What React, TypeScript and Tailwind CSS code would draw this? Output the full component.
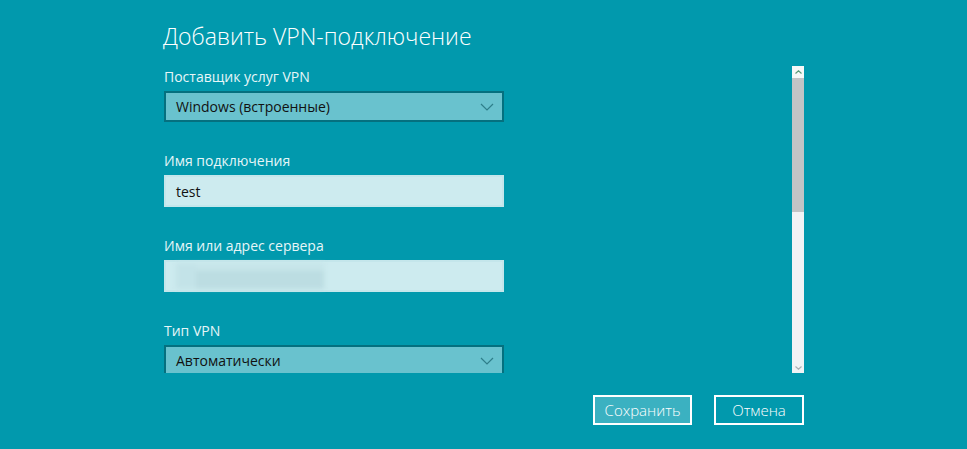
import React from "react";

const font = { fontFamily: '"Open Sans", "Noto Sans", "Liberation Sans", sans-serif' };

function Chevron() {
  return (
    <svg width="14" height="8" viewBox="0 0 14 8" className="shrink-0">
      <polyline points="1,1 7,7 13,1" fill="none" stroke="#2f7e8a" strokeWidth="1.2" />
    </svg>
  );
}

function Label({ children }: { children: React.ReactNode }) {
  return <div className="h-5 text-[14px] leading-5 text-[#e6f6f8]">{children}</div>;
}

function Dropdown({ value }: { value: string }) {
  return (
    <div className="flex h-[31px] w-[340px] items-center justify-between border-2 border-[#05707f] bg-[#69c2ce] pl-[10px] pr-[8px] text-[14px] text-[#111]">
      <span>{value}</span>
      <Chevron />
    </div>
  );
}

function TextBox({ children }: { children?: React.ReactNode }) {
  return (
    <div className="flex h-[32px] w-[340px] items-center border-2 border-[#c4e6eb] bg-[#cdebef] pl-[10px] text-[14px] text-[#111]">
      {children}
    </div>
  );
}

function Scrollbar() {
  return (
    <div className="flex w-[12px] flex-col bg-[#f1f3f5]">
      <div className="flex h-[12px] items-center justify-center bg-[#f6f8f8]">
        <svg width="7" height="4" viewBox="0 0 7 4">
          <polyline points="0.5,3.5 3.5,0.8 6.5,3.5" fill="none" stroke="#5a9a7a" strokeWidth="1.2" />
        </svg>
      </div>
      <div className="h-[134px] bg-[#c2c4c6]" />
      <div className="flex-1" />
      <div className="flex h-[10px] items-center justify-center">
        <svg width="7" height="4" viewBox="0 0 7 4">
          <polyline points="0.5,0.5 3.5,3.2 6.5,0.5" fill="none" stroke="#a9b0b3" strokeWidth="1.2" />
        </svg>
      </div>
    </div>
  );
}

export default function App() {
  return (
    <div className="h-[449px] w-[967px] overflow-hidden bg-[#0199ad] pl-[163px] pt-[20px]" style={font}>
      <div className="w-[641px]">
        <h1 className="h-[46px] text-[23px] font-light leading-[32px] text-white">Добавить VPN-подключение</h1>

        <div className="flex h-[307px] justify-between overflow-hidden">
          <div className="flex flex-col gap-[29px] pl-px pt-px">
            <div className="flex flex-col gap-[4px]">
              <Label>Поставщик услуг VPN</Label>
              <Dropdown value="Windows (встроенные)" />
            </div>
            <div className="flex flex-col gap-[4px]">
              <Label>Имя подключения</Label>
              <TextBox>test</TextBox>
            </div>
            <div className="flex flex-col gap-[4px]">
              <Label>Имя или адрес сервера</Label>
              <TextBox>
                <div className="flex h-[26px] w-[148px] blur-[2px]">
                  <div className="h-full w-[20px] bg-[#c3e3e8]" />
                  <div className="flex h-full w-[128px] flex-col">
                    <div className="h-[8px] bg-[#c6e5e9]" />
                    <div className="flex-1 bg-[#bcdde2]" />
                  </div>
                </div>
              </TextBox>
            </div>
            <div className="flex flex-col gap-[4px]">
              <Label>Тип VPN</Label>
              <Dropdown value="Автоматически" />
            </div>
          </div>
          <Scrollbar />
        </div>

        <div className="mt-[22px] flex justify-end gap-[22px]">
          <button className="h-[30px] w-[99px] border-2 border-white bg-[#3bb1c1] text-[15px] font-light text-white">Сохранить</button>
          <button className="h-[30px] w-[90px] border-2 border-white text-[15px] font-light text-white">Отмена</button>
        </div>
      </div>
    </div>
  );
}
